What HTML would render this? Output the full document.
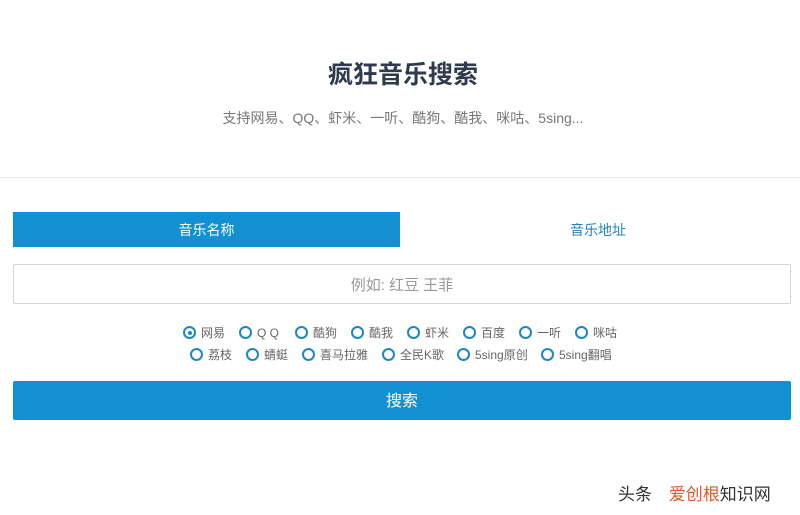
<!DOCTYPE html>
<html><head><meta charset="utf-8"><style>
body{margin:0;width:800px;height:515px;background:#fff;font-family:"Liberation Sans","Noto Sans CJK SC",sans-serif;position:relative;overflow:hidden}
.a{position:absolute}
h1{position:absolute;left:0;width:806px;top:55px;margin:0;text-align:center;font-size:25px;font-weight:bold;color:#2f3b4c}
.sub{left:0;width:806px;top:108px;text-align:center;font-size:14px;color:#777}
.hr{left:0;top:177px;width:800px;height:1px;background:#e8e8e8}
.tab{left:13px;top:212px;width:387px;height:35px;background:#1190d2;color:#fff;font-size:14px;line-height:36px;text-align:center}
.tab2{left:400px;top:212px;width:396px;height:35px;color:#1f86c0;font-size:14px;line-height:37px;text-align:center}
.inp{left:13px;top:264px;width:776px;height:38px;border:1px solid #d5d5d5;border-radius:2px;color:#999;font-size:15px;line-height:41px;text-align:center;box-sizing:content-box}
.r{font-size:12px;color:#666;white-space:nowrap;line-height:14px}
.r i{display:inline-block;width:9px;height:9px;border:2px solid #1f86c0;border-radius:50%;vertical-align:-2px;margin-right:5px;position:relative}
.r i.on::after{content:"";position:absolute;left:2.5px;top:2.5px;width:4px;height:4px;background:#1f86c0;border-radius:50%}
.btn{left:13px;top:381px;width:778px;height:39px;background:#1190d2;color:#fff;font-size:16px;line-height:42px;text-align:center;border-radius:2px}
.wm{left:618px;top:480px;font-size:17px;color:#333}
.wm b{font-weight:normal;color:#e05a2a}
</style></head><body>
<h1>疯狂音乐搜索</h1>
<div class="a sub">支持网易、QQ、虾米、一听、酷狗、酷我、咪咕、5sing...</div>
<div class="a hr"></div>
<div class="a tab">音乐名称</div>
<div class="a tab2">音乐地址</div>
<div class="a inp">例如: 红豆 王菲</div>
<div class="a r" style="left:183px;top:326px"><i class="on"></i>网易</div>
<div class="a r" style="left:239px;top:326px"><i></i>Q Q</div>
<div class="a r" style="left:295px;top:326px"><i></i>酷狗</div>
<div class="a r" style="left:351px;top:326px"><i></i>酷我</div>
<div class="a r" style="left:407px;top:326px"><i></i>虾米</div>
<div class="a r" style="left:463px;top:326px"><i></i>百度</div>
<div class="a r" style="left:519px;top:326px"><i></i>一听</div>
<div class="a r" style="left:575px;top:326px"><i></i>咪咕</div>
<div class="a r" style="left:190px;top:348px"><i></i>荔枝</div>
<div class="a r" style="left:246px;top:348px"><i></i>蜻蜓</div>
<div class="a r" style="left:302px;top:348px"><i></i>喜马拉雅</div>
<div class="a r" style="left:382px;top:348px"><i></i>全民K歌</div>
<div class="a r" style="left:457px;top:348px"><i></i>5sing原创</div>
<div class="a r" style="left:541px;top:348px"><i></i>5sing翻唱</div>
<div class="a btn">搜索</div>
<div class="a wm">头条 <b style="margin-left:12px">爱创根</b>知识网</div>
</body></html>
